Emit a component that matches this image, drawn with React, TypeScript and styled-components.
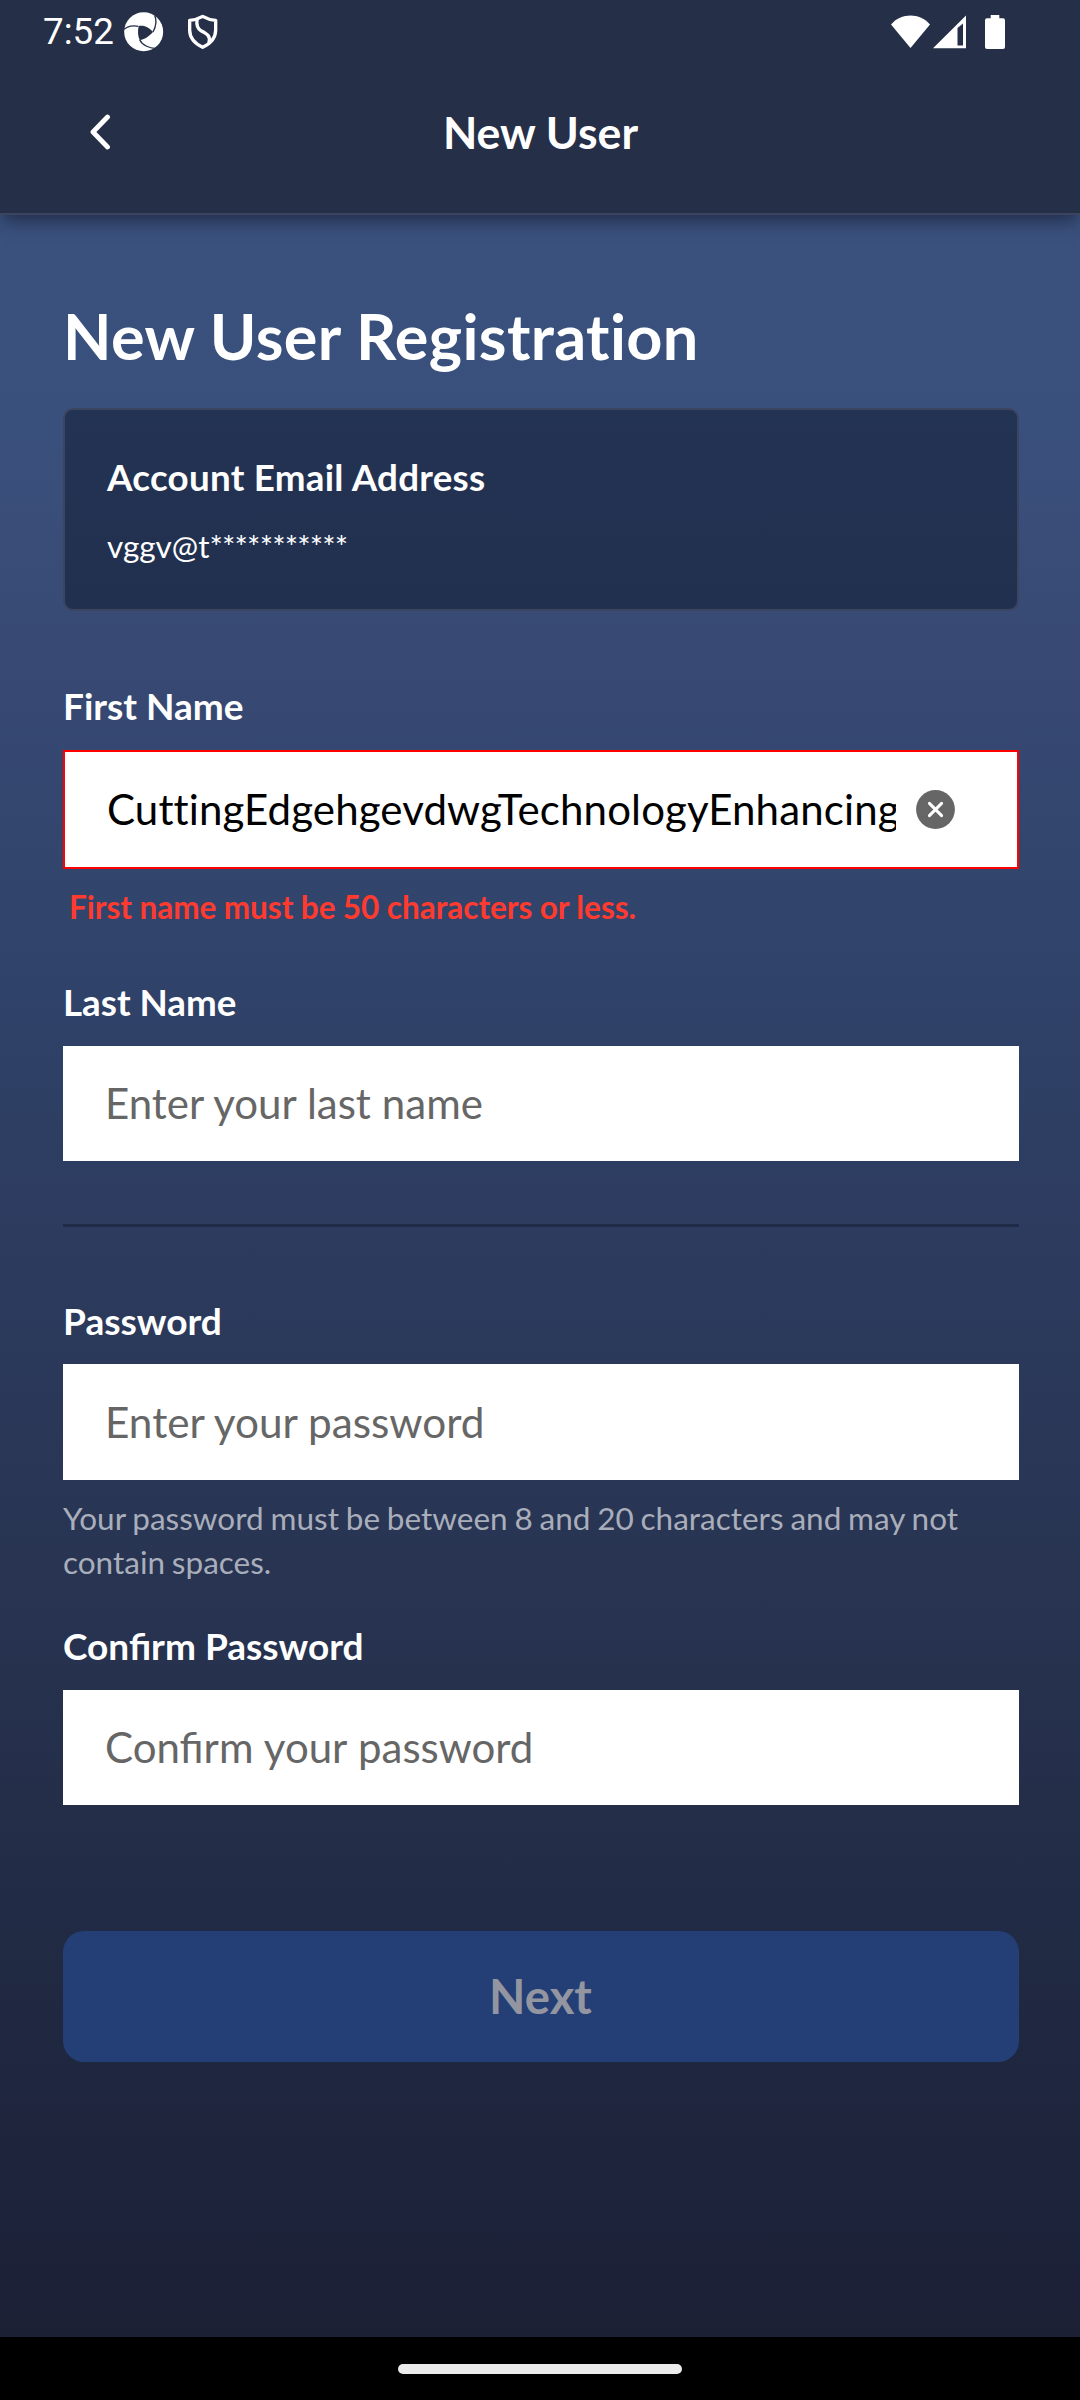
import React, { useState } from "react";
import styled, { createGlobalStyle } from "styled-components";

const GlobalStyle = createGlobalStyle`
  *, *::before, *::after { box-sizing: border-box; }
  html, body { margin: 0; padding: 0; background: #000; }
  body, input, button { font-family: Lato, "Open Sans", sans-serif; }
`;

const Screen = styled.div`
  width: 1080px;
  height: 2400px;
  display: flex;
  flex-direction: column;
  overflow: hidden;
  color: #fff;
`;

const TopArea = styled.div`
  position: relative;
  z-index: 1;
  flex: none;
  height: 215px;
  background: #252f47;
  border-bottom: 2px solid #3d455e;
  box-shadow: 0 9px 16px -3px rgba(20, 25, 45, 0.62);
`;

const StatusBar = styled.div`
  height: 63px;
  padding: 0 75px 0 43px;
  display: flex;
  align-items: center;
`;

const Clock = styled.span`
  width: 80px;
  font: 400 36.75px/63px Roboto, sans-serif;
`;

const StatusSpacer = styled.div`
  flex: 1;
`;

const Glyph = styled.svg<{ $ml?: number }>`
  display: block;
  flex: none;
  margin-left: ${(p) => p.$ml ?? 0}px;
`;

const NavHeader = styled.header`
  height: 138px;
  display: grid;
  grid-template-columns: 84px 1fr 84px;
  align-items: center;
  padding: 0 62px 0 63px;
`;

const BackButton = styled.button`
  border: 0;
  padding: 0 0 0 27px;
  background: none;
  cursor: pointer;
`;

const NavTitle = styled.h1`
  margin: 0;
  text-align: center;
  font-size: 44.6px;
  line-height: 54px;
  font-weight: 700;
`;

const Content = styled.main`
  flex: 1;
  display: flex;
  flex-direction: column;
  padding: 83px 61px 0 63px;
  background: linear-gradient(
    180deg,
    #3a517d 0%,
    #3a507c 10%,
    #384a74 20%,
    #30436a 35%,
    #2c3a5d 50%,
    #273350 66%,
    #222b45 80%,
    #1e253d 90%,
    #1b2035 100%
  );
`;

const PageTitle = styled.h2`
  margin: 0;
  font-size: 63px;
  line-height: 76px;
  font-weight: 700;
  font-variant-ligatures: none;
  letter-spacing: 0.38px;
`;

const AccountCard = styled.section`
  display: flex;
  flex-direction: column;
  gap: 28px;
  height: 203px;
  margin-top: 34px;
  padding: 45px 42px 0;
  border: 2px solid #3c4560;
  border-radius: 10px;
  background: linear-gradient(180deg, #233353, #22304f);
`;

const CardLabel = styled.div`
  font-size: 36.75px;
  line-height: 44px;
  font-weight: 700;
  letter-spacing: 0.26px;
`;

const CardValue = styled.div`
  font-size: 31.5px;
  line-height: 38px;
`;

const MaskedPart = styled.span`
  letter-spacing: -0.85px;
`;

const Field = styled.div<{ $mt: number; $gap?: number }>`
  display: flex;
  flex-direction: column;
  gap: ${(p) => p.$gap ?? 22}px;
  margin-top: ${(p) => p.$mt}px;
`;

const FieldLabel = styled.label<{ $size?: number }>`
  font-size: ${(p) => p.$size ?? 36.75}px;
  line-height: 44px;
  font-weight: 700;
`;

const InputBox = styled.div<{ $h: number; $invalid?: boolean }>`
  display: flex;
  align-items: center;
  height: ${(p) => p.$h}px;
  padding: 0 ${(p) => (p.$invalid ? 62 : 42)}px 1px 42px;
  background: #fff;
  border: ${(p) => (p.$invalid ? "2px solid #ff0000" : "0")};
`;

const TextInput = styled.input<{ $size?: number; $wordGap?: number }>`
  flex: 1;
  min-width: 0;
  height: 60px;
  padding: 0;
  border: 0;
  outline: 0;
  background: transparent;
  color: #000;
  font-size: ${(p) => p.$size ?? 42}px;
  font-variant-ligatures: ${(p) => (p.value ? "none" : "normal")};
  letter-spacing: ${(p) => (p.value ? "0.13px" : "normal")};
  word-spacing: ${(p) => p.$wordGap ?? 0}px;
  &::placeholder {
    color: #666;
    opacity: 1;
  }
`;

const ClearButton = styled.button`
  flex: none;
  width: 39px;
  height: 39px;
  margin-left: 20px;
  padding: 0;
  border: 0;
  background: none;
  cursor: pointer;
`;

const ErrorText = styled.p`
  margin: 19px 0 0 6px;
  color: #ff3b30;
  font-size: 31.5px;
  line-height: 38px;
  font-weight: 700;
  word-spacing: -0.3px;
`;

const HelpText = styled.p`
  margin: 16px 0 0;
  color: #a9aebb;
  font-size: 31.5px;
  line-height: 44px;
  word-spacing: -1.25px;
`;

const Divider = styled.hr`
  width: 100%;
  height: 3px;
  margin: 63px 0 0;
  border: 0;
  background: #202b48;
`;

const NextButton = styled.button`
  flex: none;
  height: 131px;
  margin-top: 126px;
  padding: 0 1px 2px 0;
  border: 0;
  border-radius: 21px;
  background: #243f76;
  color: #9396a1;
  font-size: 47.25px;
  font-weight: 700;
`;

const GestureBar = styled.div`
  flex: none;
  height: 63px;
  display: flex;
  justify-content: center;
  padding-top: 27px;
  background: #000;
`;

const GesturePill = styled.div`
  width: 284px;
  height: 10px;
  border-radius: 5px;
  background: #ebebeb;
`;

function ApertureIcon() {
  return (
    <Glyph width="40" height="40" viewBox="0 0 120 120" $ml={1}>
      <circle cx="59" cy="59.5" r="58.5" fill="#fff" />
      <g fill="none" stroke="#252f47" strokeWidth="4">
        <path d="M0 52C10 43 28 39 43 43" />
        <path d="M92 10C98 24 97 42 87 60" />
        <path d="M47 83C54 98 76 110 96 109" />
      </g>
      <path d="M44 42C60 38 76 46 87 60C76 72 64 82 47 84C41 72 41 56 44 42Z" fill="#252f47" />
    </Glyph>
  );
}

function ShieldIcon() {
  return (
    <Glyph width="32" height="36" viewBox="0 0 96 108" $ml={23}>
      <g fill="none" stroke="#fff" strokeWidth="10" strokeLinejoin="round" strokeLinecap="round">
        <path d="M47 7C35 14 20 18 8 19V48C8 73 24 89 47 100C70 89 86 73 86 48V19C74 18 59 14 47 7Z" />
        <path d="M30 16C28 34 31 44 42 50C60 59 72 67 66 86" />
      </g>
    </Glyph>
  );
}

interface BlankFieldProps {
  id: string;
  label: string;
  placeholder: string;
  top: number;
  gap?: number;
  height?: number;
  labelSize?: number;
  textSize?: number;
  wordGap?: number;
  secret?: boolean;
}

function BlankField({
  id,
  label,
  placeholder,
  top,
  gap,
  height = 115,
  labelSize,
  textSize,
  wordGap,
  secret,
}: BlankFieldProps) {
  return (
    <Field $mt={top} $gap={gap}>
      <FieldLabel htmlFor={id} $size={labelSize}>{label}</FieldLabel>
      <InputBox $h={height}>
        <TextInput
          id={id}
          type={secret ? "password" : "text"}
          placeholder={placeholder}
          $size={textSize}
          $wordGap={wordGap}
        />
      </InputBox>
    </Field>
  );
}

export default function App() {
  const [firstName, setFirstName] = useState(
    "CuttingEdgehgevdwgTechnologyEnhancingInnovationSolutions"
  );
  return (
    <Screen>
      <GlobalStyle />
      <TopArea>
        <StatusBar>
          <Clock>7:52</Clock>
          <ApertureIcon />
          <ShieldIcon />
          <StatusSpacer />
          <Glyph width="39" height="34" viewBox="0 0 39 34">
            <path d="M0 9.5C10-2.5 29-2.5 39 9.5L19.5 33Z" fill="#fff" />
          </Glyph>
          <Glyph width="34" height="34" viewBox="0 0 34 34" $ml={3}>
            <path d="M0 33.3L33 .5V33.3ZM24.5 13V30.5H30V8.5Z" fill="#fff" fillRule="evenodd" />
          </Glyph>
          <Glyph width="20" height="34" viewBox="0 0 20 34" $ml={18}>
            <path d="M5.7 0H14.3V3.2H18Q20 3.2 20 5.2V32Q20 34 18 34H2Q0 34 0 32V5.2Q0 3.2 2 3.2H5.7Z" fill="#fff" />
          </Glyph>
        </StatusBar>
        <NavHeader>
          <BackButton aria-label="Back">
            <Glyph width="20" height="36" viewBox="0 0 20 36">
              <path d="M17.5 3L3 18L17.5 33" fill="none" stroke="#fff" strokeWidth="4.8" strokeLinecap="round" strokeLinejoin="round" />
            </Glyph>
          </BackButton>
          <NavTitle>New User</NavTitle>
        </NavHeader>
      </TopArea>
      <Content>
        <PageTitle>New User Registration</PageTitle>
        <AccountCard>
          <CardLabel>Account Email Address</CardLabel>
          <CardValue>
            vggv@t<MaskedPart>***********</MaskedPart>
          </CardValue>
        </AccountCard>
        <Field $mt={73}>
          <FieldLabel htmlFor="first" $size={37}>First Name</FieldLabel>
          <InputBox $h={119} $invalid>
            <TextInput id="first" value={firstName} onChange={(e) => setFirstName(e.target.value)} />
            <ClearButton aria-label="Clear" onClick={() => setFirstName("")}>
              <Glyph width="39" height="39" viewBox="0 0 39 39">
                <circle cx="19.5" cy="19.5" r="19.4" fill="#666" />
                <path d="M13.4 13.4L25.6 25.6M25.6 13.4L13.4 25.6" stroke="#fff" strokeWidth="3" strokeLinecap="round" />
              </Glyph>
            </ClearButton>
          </InputBox>
        </Field>
        <ErrorText>First name must be 50 characters or less.</ErrorText>
        <BlankField
          id="last"
          label="Last Name"
          placeholder="Enter your last name"
          top={54}
          wordGap={0.2}
        />
        <Divider />
        <BlankField
          id="pw"
          label="Password"
          placeholder="Enter your password"
          top={72}
          gap={21}
          height={116}
          labelSize={37.1}
          textSize={42.3}
          secret
        />
        <HelpText>
          Your password must be between 8 and 20 characters and may not contain spaces.
        </HelpText>
        <BlankField
          id="pw2"
          label="Confirm Password"
          placeholder="Confirm your password"
          top={40}
          labelSize={37}
          wordGap={0.7}
          secret
        />
        <NextButton disabled>Next</NextButton>
      </Content>
      <GestureBar>
        <GesturePill />
      </GestureBar>
    </Screen>
  );
}
